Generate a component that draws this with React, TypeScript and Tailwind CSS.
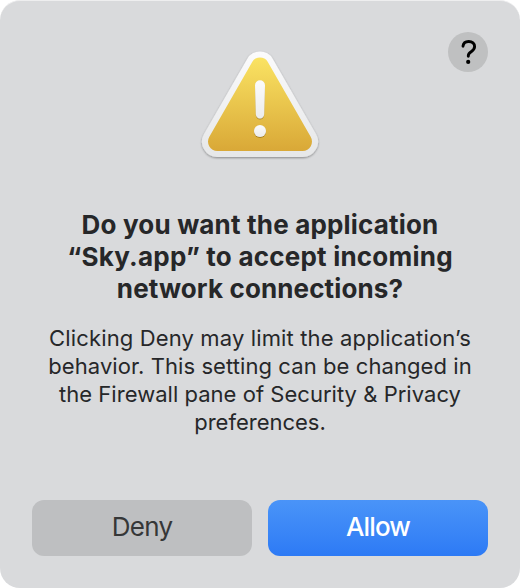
function WarningIcon() {
  return (
    <svg width="140" height="130" viewBox="0 0 420 390" aria-hidden="true">
      <defs>
        <linearGradient id="rim" x1="0" y1="0" x2="0" y2="1">
          <stop offset="0" stopColor="#fbfbfc" />
          <stop offset="1" stopColor="#e6e7e8" />
        </linearGradient>
        <linearGradient id="face" x1="0" y1="0" x2="0" y2="1">
          <stop offset="0" stopColor="#fae363" />
          <stop offset="1" stopColor="#d9a837" />
        </linearGradient>
        <linearGradient id="bar" x1="0" y1="0" x2="0" y2="1">
          <stop offset="0" stopColor="#fbfbfb" />
          <stop offset="1" stopColor="#ececec" />
        </linearGradient>
        <filter id="drop" x="-10%" y="-10%" width="120%" height="125%">
          <feDropShadow dx="0" dy="3" stdDeviation="3" floodColor="#000" floodOpacity="0.38" />
        </filter>
        <filter id="markDrop" x="-50%" y="-20%" width="200%" height="150%">
          <feDropShadow dx="0" dy="2.5" stdDeviation="1.5" floodColor="#6b4d00" floodOpacity="0.55" />
        </filter>
      </defs>
      <path
        d="M172 56A44 44 0 0 1 248 56L378 282A46 46 0 0 1 338 351L82 351A46 46 0 0 1 42 282Z"
        fill="url(#rim)"
        filter="url(#drop)"
      />
      <path
        d="M187 65A27 27 0 0 1 233 65L362 290A28.500 28.500 0 0 1 338 333L82 333A28.500 28.500 0 0 1 58 290Z"
        fill="url(#face)"
      />
      <g filter="url(#markDrop)" fill="url(#bar)">
        <path d="M195 136A15 15 0 0 1 225 136L222.500 223A12.500 12.500 0 0 1 197.500 223Z" />
        <circle cx="210" cy="273" r="18" />
      </g>
    </svg>
  );
}

export default function App() {
  return (
    <div className="h-[588px] w-[520px] bg-white font-['Inter',sans-serif]">
      <main className="flex h-full flex-col rounded-[20px] border-t border-[#eeeeef] bg-[#d9dadc] px-8 pt-[31px] pb-8">
        <header className="grid h-[138px] grid-cols-[40px_1fr_40px]">
          <div className="col-start-2 mt-2 flex justify-center">
            <WarningIcon />
          </div>
          <button
            aria-label="Help"
            className="flex size-10 items-center justify-center rounded-full bg-[#bfc0c1] text-black"
          >
            <svg width="20" height="28" viewBox="0 0 20 28" fill="none" aria-hidden="true">
              <path
                d="M5 8.200C5.300 5.200 7.400 3.500 10.700 3.500C14.300 3.500 16.600 5.500 16.600 8.600C16.600 10.900 15.500 12.200 13.500 13.500C11.300 14.900 10.300 15.900 10.300 17.800V18.200"
                stroke="currentColor"
                strokeWidth="2.900"
                strokeLinecap="round"
                strokeLinejoin="round"
              />
              <circle cx="10.200" cy="23.900" r="2.100" fill="currentColor" />
            </svg>
          </button>
        </header>

        <h1 className="mt-[39px] flex flex-col items-center text-[26px] leading-8 font-bold whitespace-nowrap text-[#262729]">
          <span className="tracking-[0.18px]">Do you want the application</span>
          <span className="tracking-[0.22px]">“Sky.app” to accept incoming</span>
          <span className="tracking-[0.12px]">network connections?</span>
        </h1>

        <p className="mt-[19px] flex flex-col items-center text-[22px] leading-7 whitespace-nowrap text-[#262729]">
          <span className="tracking-[0.14px]">Clicking Deny may limit the application’s</span>
          <span className="tracking-[0.08px]">behavior. This setting can be changed in</span>
          <span className="tracking-[0.03px]">the Firewall pane of Security &amp; Privacy</span>
          <span>preferences.</span>
        </p>

        <div className="mt-auto grid grid-cols-2 gap-4 text-[26px]">
          <button className="h-14 rounded-xl bg-[#bebfc1] pb-1 tracking-[-0.7px] text-[#363738]">Deny</button>
          <button className="h-14 rounded-xl bg-linear-to-b from-[#4a94f8] to-[#2d7af5] pb-1 font-medium tracking-[-0.9px] text-white">
            Allow
          </button>
        </div>
      </main>
    </div>
  );
}
